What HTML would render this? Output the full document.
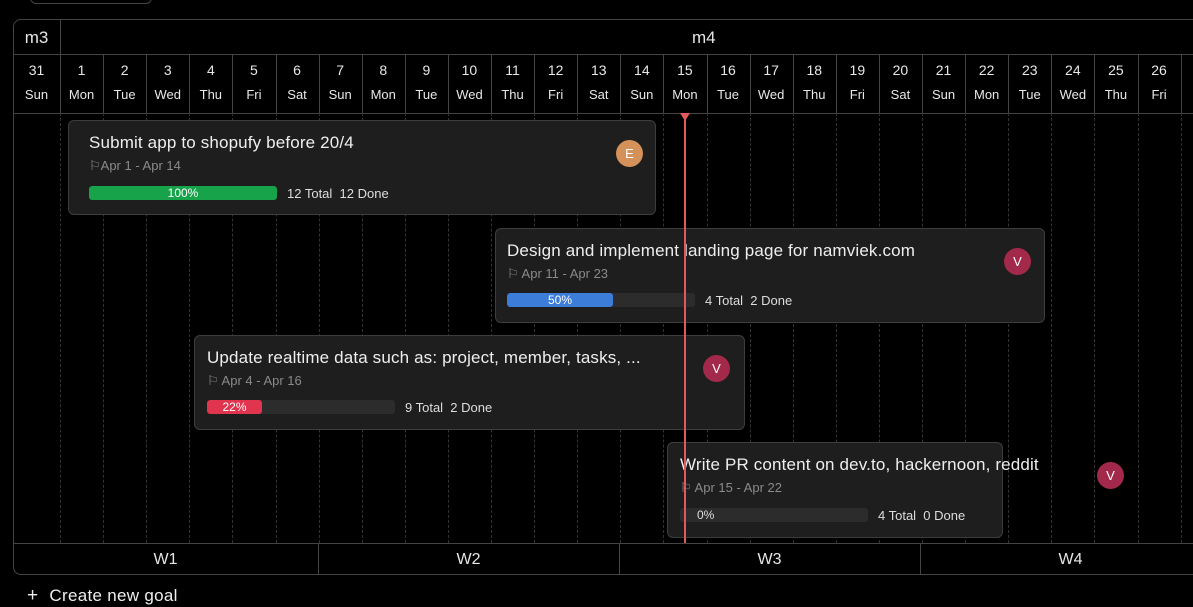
<!DOCTYPE html><html><head><style>
*{box-sizing:border-box;margin:0;padding:0}
body{width:1193px;height:602px;background:#000;font-family:"Liberation Sans",sans-serif;color:#e6e6e6;position:relative;overflow:hidden}
.a{position:absolute}
.frame{left:13px;top:19px;width:1200px;height:556px;border:1px solid #444;border-radius:8px}
.hl{height:1px;background:#444}
.vl{width:1px;background:#444}
.dl{width:0;border-left:1px dashed #333}
.day{top:54px;width:43px;height:59px;text-align:center;font-size:14px;color:#e8e8e8}
.day b{display:block;font-weight:normal;margin-top:8px}
.day i{display:block;font-style:normal;font-size:13px;margin-top:9px}
.card{background:#1e1e1e;border:1px solid #3d3d3d;border-radius:6px}
.t{font-size:17px;letter-spacing:0.15px;color:#eee;white-space:nowrap}
.d{font-size:13px;color:#8a8a8a}
.bar{height:14px;border-radius:3px;background:#2c2c2c;overflow:hidden}
.fill{height:14px;border-radius:3px;font-size:12px;color:#fff;text-align:center;line-height:14px}
.st{font-size:13px;color:#ddd;white-space:nowrap}
.av{width:27px;height:27px;border-radius:50%;text-align:center;line-height:27px;font-size:13px;color:#fff}
.wk{top:544px;height:30px;text-align:center;line-height:32px;font-size:16px}
</style></head><body>
<div class="a" style="left:30px;top:-10px;width:122px;height:14px;border:1px solid #444;border-radius:6px"></div>
<div class="a frame"></div>
<div class="a hl" style="left:13px;top:54px;width:1180px"></div>
<div class="a hl" style="left:13px;top:113px;width:1180px"></div>
<div class="a hl" style="left:13px;top:543px;width:1180px"></div>
<div class="a vl" style="left:60px;top:19px;height:94px"></div>
<div class="a" style="left:13px;top:28px;width:47px;text-align:center;font-size:17px">m3</div>
<div class="a" style="left:692px;top:28px;font-size:17px">m4</div>
<div id="cols"></div>
<div class="a vl" style="left:318px;top:543px;height:31px"></div>
<div class="a vl" style="left:619px;top:543px;height:31px"></div>
<div class="a vl" style="left:920px;top:543px;height:31px"></div>
<div class="a wk" style="left:13px;width:305px">W1</div>
<div class="a wk" style="left:318px;width:301px">W2</div>
<div class="a wk" style="left:619px;width:301px">W3</div>
<div class="a wk" style="left:920px;width:301px">W4</div>
<div class="a" style="left:27px;top:585px;font-size:17px;letter-spacing:0.3px;color:#eee"><span style="font-size:19px;margin-right:11px">+</span>Create new goal</div>

<div class="a card" style="left:68px;top:120px;width:588px;height:95px">
<div class="a t" style="left:20px;top:12px">Submit app to shopufy before 20/4</div>
<div class="a d" style="left:20px;top:37px">⚐Apr 1 - Apr 14</div>
<div class="a bar" style="left:20px;top:65px;width:188px"><div class="fill" style="width:188px;background:#17a34a">100%</div></div>
<div class="a st" style="left:218px;top:65px">12 Total&nbsp; 12 Done</div>
<div class="a av" style="left:547px;top:19px;background:#d4915a">E</div></div>

<div class="a card" style="left:495px;top:228px;width:550px;height:95px">
<div class="a t" style="left:11px;top:12px">Design and implement landing page for namviek.com</div>
<div class="a d" style="left:11px;top:37px">⚐ Apr 11 - Apr 23</div>
<div class="a bar" style="left:11px;top:64px;width:188px"><div class="fill" style="width:106px;background:#3b7dd8">50%</div></div>
<div class="a st" style="left:209px;top:64px">4 Total&nbsp; 2 Done</div>
<div class="a av" style="left:508px;top:19px;background:#a3294a">V</div></div>

<div class="a card" style="left:194px;top:335px;width:551px;height:95px">
<div class="a t" style="left:12px;top:12px">Update realtime data such as: project, member, tasks, ...</div>
<div class="a d" style="left:12px;top:37px">⚐ Apr 4 - Apr 16</div>
<div class="a bar" style="left:12px;top:64px;width:188px"><div class="fill" style="width:55px;background:#e0344f">22%</div></div>
<div class="a st" style="left:210px;top:64px">9 Total&nbsp; 2 Done</div>
<div class="a av" style="left:508px;top:19px;background:#a3294a">V</div></div>

<div class="a card" style="left:667px;top:442px;width:336px;height:96px">
<div class="a t" style="left:12px;top:12px">Write PR content on dev.to, hackernoon, reddit</div>
<div class="a d" style="left:12px;top:37px">⚐ Apr 15 - Apr 22</div>
<div class="a bar" style="left:12px;top:65px;width:188px"><div class="fill" style="width:40px;text-align:left;padding-left:17px;color:#ddd">0%</div></div>
<div class="a st" style="left:210px;top:65px">4 Total&nbsp; 0 Done</div></div>
<div class="a av" style="left:1097px;top:462px;background:#a3294a">V</div>

<div class="a" style="left:684px;top:113px;width:2px;height:430px;background:#e05a5a"></div>
<div class="a" style="left:680px;top:113px;width:0;height:0;border-left:5px solid transparent;border-right:5px solid transparent;border-top:8px solid #e05a5a"></div>
<script>
var days=["Sun","Mon","Tue","Wed","Thu","Fri","Sat"],nums=[31,1,2,3,4,5,6,7,8,9,10,11,12,13,14,15,16,17,18,19,20,21,22,23,24,25,26,27],h="";
for(var i=0;i<nums.length;i++){var x=i==0?13:60+(i-1)*43.1,w=i==0?47:43.1;
h+='<div class="a day" style="left:'+x+'px;width:'+w+'px"><b>'+nums[i]+'</b><i>'+days[i%7]+'</i></div>';
if(i>0){h+='<div class="a vl" style="left:'+Math.round(x)+'px;top:54px;height:59px"></div><div class="a dl" style="left:'+Math.round(x)+'px;top:113px;height:430px"></div>';}}
document.getElementById("cols").innerHTML=h;
</script>
</body></html>
